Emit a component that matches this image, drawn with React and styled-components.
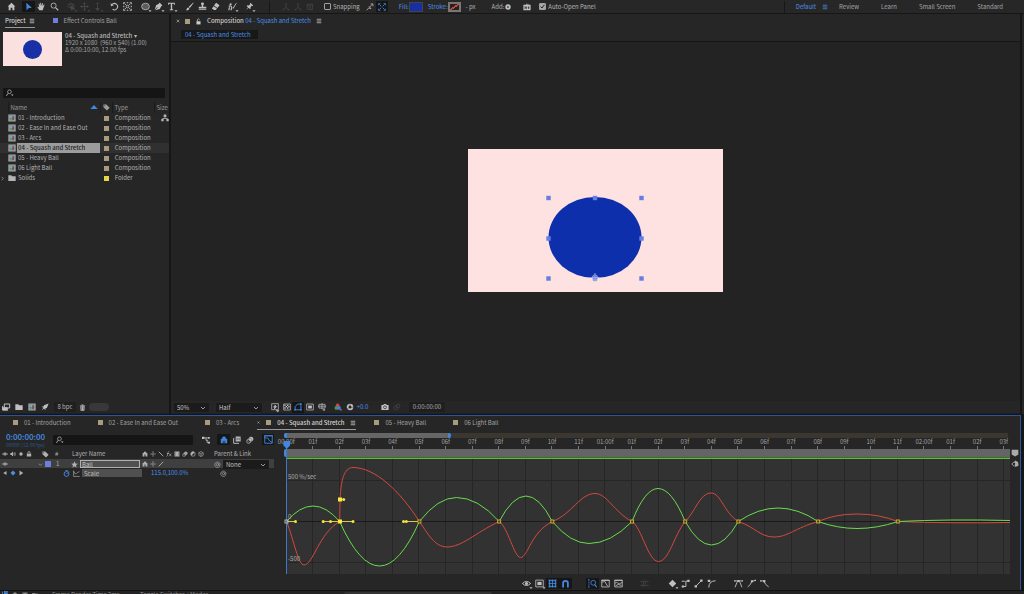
import React from 'react';
import styled, { createGlobalStyle, css } from 'styled-components';

const GlobalStyle = createGlobalStyle`
  * {
    box-sizing: border-box;
  }

  body {
    margin: 0;
    background: #161616;
    color: #b4b4b4;
    font-family: 'Noto Sans CJK SC', 'Noto Sans', sans-serif;
    font-size: 6px;
    line-height: 10px;
    overflow: hidden;
  }

  button, input, select {
    font: inherit;
    color: inherit;
    margin: 0;
    padding: 0;
    border: 0;
    background: none;
  }

  svg {
    display: block;
    flex: none;
  }
`;

/* ---------- icons ---------- */

const line = { fill: 'none', stroke: 'currentColor', strokeWidth: 1.1 };

const icons = {
  home: <path d="M6 1 0.8 6H2.2V11H4.8V7.6H7.2V11H9.8V6H11.2Z" />,
  select: <path d="M3 1 10.5 7.6 6.4 7.9 3.4 11Z" />,
  hand: (
    <path d="M3.2 11 0.8 7.2C0.4 6.4 1.4 6 2 6.6L3 7.8 2.2 2.8C2.1 2 3.1 1.8 3.3 2.6L4.2 5.4 4.3 1.6C4.3 0.8 5.4 0.8 5.5 1.6L5.8 5.2 6.8 1.9C7 1.2 8 1.4 7.9 2.2L7.4 5.7 9 3.6C9.5 3 10.3 3.6 9.9 4.3L8.2 9 7.6 11Z" />
  ),
  zoom: (
    <g {...line}>
      <circle cx="4.8" cy="4.8" r="3.4" />
      <path d="M7.4 7.4 11 11" strokeWidth="1.5" />
    </g>
  ),
  orbit: (
    <g {...line}>
      <ellipse cx="5.5" cy="5" rx="4.5" ry="2.6" />
      <path d="M3 3.6Q6 0 8 4L6 9 10 10" />
      <path d="M5 5 6 11 7.4 8.6 10 8.6Z" fill="currentColor" />
    </g>
  ),
  pan: <path d="M6 0 8 2.5H6.6V5.4H9.5V4L12 6 9.5 8V6.6H6.6V9.5H8L6 12 4 9.5H5.4V6.6H2.5V8L0 6 2.5 4V5.4H5.4V2.5H4Z" />,
  dolly: <path d="M6 0 7.5 2.5H6.5V8H9L6 12 3 8H5.5V2.5H4.5Z" />,
  rotate: (
    <g>
      <path {...line} d="M2.6 3.6A4.2 4.2 0 1 1 3.4 9.6" strokeWidth="1.4" />
      <path d="M0.8 1.5 1.4 5.6 5 4.4Z" />
    </g>
  ),
  anchor: (
    <g {...line}>
      <path d="M1 3V1H3M5 1H7M9 1H11V3M11 5V7M11 9V11H9M7 11H5M3 11H1V9M1 7V5" strokeWidth="1.4" />
      <circle cx="6" cy="6" r="1.8" />
      <path d="M2.6 2.6 4.4 4.4M9.4 2.6 7.6 4.4M2.6 9.4 4.4 7.6M9.4 9.4 7.6 7.6" />
    </g>
  ),
  ellipse: <ellipse cx="6" cy="6" rx="5.2" ry="4.4" fill="#5c5c5c" stroke="currentColor" />,
  pen: <path d="M7.5 0.8 11.2 4.5 9.6 5.6 7.8 9.2 1.6 11 4.6 7.8 5.4 6.8 4 7.2 1 10.4 2.8 4.2 6.4 2.4Z" />,
  type: <path d="M1.5 1H10.5V3.8H9.2V2.4H6.9V9.8H8.2V11H3.8V9.8H5.1V2.4H2.8V3.8H1.5Z" />,
  brush: <path d="M11 0.8 11.4 1.2 6.4 8 4.8 6.6ZM4.2 7.2 5.9 8.7C5.4 10.8 3 11.4 1 11 2.4 10 2.4 7.6 4.2 7.2Z" />,
  stamp: <path d="M6 0.8C8.6 0.8 8.2 3.4 7 4.4V6.4H11V8.6H1V6.4H5V4.4C3.8 3.4 3.4 0.8 6 0.8ZM1 9.6H11V10.8H1Z" />,
  eraser: <path d="M6.8 1 11.4 4.2 8.6 8 4 4.8ZM3.5 5.5 8 8.7 6.4 10.8H4L1.2 8.8Z" />,
  roto: (
    <g>
      <circle cx="3.5" cy="3" r="1.5" />
      <path {...line} d="M1 6Q3.5 4 5 7L4 11M2 7 1 11" strokeWidth="1.5" />
      <path d="M11 1 11.5 1.5 7.8 8 6.4 9.6 6.7 7.4Z" />
    </g>
  ),
  pin: <path d="M7.2 1 11 4.8 9.8 5.3 8.9 5 7.4 6.7 7.5 8.7 6.5 9.4 4.6 7.5 1.2 10.8 4 7 2.2 5.4 3.2 4.4 5.2 4.7 7 3.1 6.7 2.1Z" />,
  axis: (
    <g {...line}>
      <path d="M6 1V6.6L1.6 10.4M6 6.6 10.4 10.4M4.8 2.5 6 1 7.2 2.5M1.6 8.6V10.4H3.4M10.4 8.6V10.4H8.6" />
    </g>
  ),
  viewAxis: (
    <g {...line}>
      <path d="M1.5 2.5 10 1.5 9.5 10 2.5 9.5ZM6 6 2 2M6 6 9 1.8M6 6 6.5 10" />
    </g>
  ),
  snapArrow: (
    <g {...line}>
      <path d="M1 11 4 7.5 7.5 8.5 4.5 5M5 6.5 10 1.6M6.8 1.4H10.4V5" />
    </g>
  ),
  snapBox: (
    <g {...line} strokeWidth="1.4">
      <path d="M1 3.4V1H3.4M8.6 1H11V3.4M11 8.6V11H8.6M3.4 11H1V8.6" />
      <path d="M2.4 2.4 4.4 4.4M9.6 2.4 7.6 4.4M2.4 9.6 4.4 7.6M9.6 9.6 7.6 7.6" />
      <path d="M5.2 6H6.8" />
    </g>
  ),
  play: (
    <g>
      <circle cx="6" cy="6" r="5.4" />
      <path d="M4.8 3.4 8.4 6 4.8 8.6Z" fill="#262626" />
    </g>
  ),
  panelBox: (
    <g>
      <path d="M0.6 2.5H4.5V1H5.6V2.5H6.8V1H8V2.5H11.4V11H0.6Z" />
      <path d="M3 5V9M5 5V9M3 7H5M7 7H9.6M8.4 5V9" fill="none" stroke="#262626" />
    </g>
  ),
  menu: (
    <g {...line} strokeWidth="1.5">
      <path d="M1.5 2.5H10.5M1.5 6H10.5M1.5 9.5H10.5" />
    </g>
  ),
  close: <path {...line} d="M2 2 10 10M10 2 2 10" strokeWidth="1.8" />,
  lock: (
    <g>
      <path d="M2.5 5.5H9.5V11H2.5Z" />
      <path {...line} d="M4 5.5V3Q6 0 8 3" strokeWidth="1.4" />
    </g>
  ),
  search: (
    <g {...line}>
      <circle cx="5.2" cy="4.2" r="2.8" />
      <path d="M3.2 6.4 0.6 10.4" strokeWidth="1.3" />
      <path d="M7.4 8.2H11.4L9.4 10.6Z" fill="currentColor" stroke="none" />
    </g>
  ),
  comp: (
    <g>
      <path d="M0.5 0.8H11.5V11.2H0.5Z" fill="#b4b4b4" />
      <path d="M1.4 2V10M10.6 2V10" stroke="#555" strokeDasharray="1.2 1" />
      <path d="M2.6 2.4H9.4V9.6H2.6Z" fill="#5a6872" />
      <circle cx="5" cy="4.8" r="1.9" fill="#7fb2e0" />
      <path d="M5.6 5H8.8V8.2H5.6Z" fill="#8f4a44" />
      <path d="M3 9.2 4.8 5.8 6.6 9.2Z" fill="#62b06a" />
    </g>
  ),
  folder: <path d="M0.5 1.8H5L6 3.2H11.5V10.4H0.5Z" />,
  tag: <path d="M0.8 1H5.6L11.4 6.4 6.8 11.2 0.8 5.6ZM2.8 2.2A0.9 0.9 0 1 0 2.9 4 0.9 0.9 0 0 0 2.8 2.2Z" fillRule="evenodd" />,
  network: <path d="M4 0.8H8V4.4H6.6V6H9.8V7.4H11.6V11H8V7.4H8.6V7H3.4V7.4H4V11H0.4V7.4H2.2V6H5.4V4.4H4Z" />,
  chevronDown: <path {...line} d="M2 4 6 8 10 4" strokeWidth="1.5" />,
  chevronRight: <path {...line} d="M4 2 8 6 4 10" strokeWidth="1.5" />,
  interpret: (
    <g {...line}>
      <path d="M3.5 1.5H11.5V7.5H3.5ZM1 4.5V10.5H9" strokeWidth="1.5" />
      <path d="M1 7H8V10.5H1Z" fill="currentColor" />
    </g>
  ),
  rocket: <path d="M11.4 0.6 8.8 7.6 6.8 7.8 6.4 11 4.6 8.4 1 11 3.6 7 1 5.6 4.2 5 4.6 3.2Z" />,
  trash: <path d="M4.4 0.8H7.6V2H10.6V3.2H1.4V2H4.4ZM2.2 4H9.8L9.2 11.4H2.8ZM4.4 5.2V10H5.2V5.2ZM6.8 5.2V10H7.6V5.2Z" fillRule="evenodd" />,
  fastPreview: (
    <g {...line}>
      <path d="M1 1H11V10H1Z" />
      <path d="M6.5 3 4 6.2H6L5 9 8.4 5.4H6.4Z" fill="currentColor" />
      <path d="M8 11.4H12L10 13Z" fill="currentColor" />
    </g>
  ),
  grid: (
    <g {...line}>
      <path d="M1 1.5H11V10.5H1Z" />
      <path d="M2 2.5H4V4.5H2ZM6 2.5H8V4.5H6ZM4 4.5H6V6.5H4ZM8 4.5H10V6.5H8ZM2 6.5H4V8.5H2ZM6 6.5H8V8.5H6Z" fill="currentColor" stroke="none" />
    </g>
  ),
  mask: (
    <g {...line}>
      <path d="M1.6 10.2V5.6L5.4 1.6H10.4V10.2Z" strokeWidth="1.4" />
      <path d="M0.4 9H2.8V11.4H0.4ZM9.2 9H11.6V11.4H9.2ZM9.2 0.4H11.6V2.8H9.2Z" fill="currentColor" stroke="none" />
    </g>
  ),
  region: (
    <g>
      <path {...line} d="M1 1.5H11V10.5H1Z" />
      <path d="M3.2 3.8H8.8V8.2H3.2Z" />
    </g>
  ),
  guides: (
    <g {...line}>
      <path d="M1.4 2H10.6V7.6H1.4ZM6 0V9.6M0 4.8H12M9 8.4V12M7.2 10.2H10.8" />
    </g>
  ),
  channels: (
    <g>
      <circle cx="5.4" cy="3.6" r="2.8" fill="#d8413c" />
      <circle cx="3.6" cy="7.4" r="2.8" fill="#3f9c4b" />
      <circle cx="7.4" cy="7.4" r="2.8" fill="#4f7ddf" />
      <path d="M9 9.6H12L10.5 11.6Z" />
    </g>
  ),
  exposure: (
    <g>
      <circle {...line} cx="6" cy="6" r="3.6" strokeWidth="2.6" />
      <path d="M6 1V4M11 6 8 7M2 9 4 7" stroke="#262626" strokeWidth="0.7" />
    </g>
  ),
  camera: (
    <g>
      <path d="M0.6 3H3.4L4.4 1.4H7.6L8.6 3H11.4V10.4H0.6Z" />
      <circle cx="6" cy="6.4" r="2.2" fill="none" stroke="#262626" />
    </g>
  ),
  snapshot: (
    <g {...line}>
      <circle cx="4" cy="7.5" r="2.8" />
      <circle cx="7.6" cy="4.4" r="2.8" />
    </g>
  ),
  flowchart: (
    <g>
      <path d="M0 1H3.6V4.6H0ZM9 1.6H11.6V4H9ZM9 8.6H12V11.4H9Z" />
      <path {...line} d="M3 2.8H9M6 2.8V6.4H9.4M7.6 6.4V10H9" strokeWidth="1.2" />
    </g>
  ),
  shy: <path d="M6 0.8A2.6 2.6 0 0 1 8.6 4H10.8V10.8H7.8V7.2H6.8V10.8H5.2V7.2H4.2V10.8H1.2V4H3.4A2.6 2.6 0 0 1 6 0.8Z" />,
  frameBlend: (
    <g>
      <path d="M4 0.8H11.4V8.2H4Z" />
      <path {...line} d="M1 3V11H9" strokeWidth="1.4" />
      <path d="M6.2 2.6V6.4M9.2 2.6V6.4" stroke="#262626" />
    </g>
  ),
  motionBlur: (
    <g fill="none" stroke="currentColor">
      <circle cx="7.6" cy="4.6" r="3" fill="currentColor" />
      <circle cx="5.6" cy="6.4" r="3" stroke="#777" />
      <circle cx="4" cy="8" r="3" />
    </g>
  ),
  graph: (
    <g {...line} strokeWidth="1.2">
      <path d="M1 1V11H11V1ZM2 4H5Q7 9 11 10M0 1H12M0 3H2" />
    </g>
  ),
  eye: (
    <g>
      <path {...line} d="M0.6 6Q6 0.6 11.4 6 6 11.4 0.6 6Z" strokeWidth="1.3" />
      <circle cx="6" cy="6" r="2" />
    </g>
  ),
  speaker: (
    <g>
      <path d="M0.8 4H3L6 1V11L3 8H0.8Z" />
      <path {...line} d="M7.6 3.6Q9 6 7.6 8.4M9.4 2Q12 6 9.4 10" strokeWidth="1.3" />
    </g>
  ),
  dot: <circle cx="6" cy="6" r="3.4" />,
  padlock: (
    <g>
      <path d="M1.6 5.4H10.4V11H1.6Z" />
      <path {...line} d="M3.8 5.6V3.4A2.2 2.2 0 0 1 8.2 3.4V5.6" strokeWidth="1.7" />
    </g>
  ),
  sun: (
    <g {...line}>
      <circle cx="6" cy="6" r="2.2" />
      <path d="M6 0.6V3M6 9V11.4M0.6 6H3M9 6H11.4" strokeWidth="1.4" />
    </g>
  ),
  backslash: <path {...line} d="M1.5 1.5 10.5 10.5" strokeWidth="1.8" />,
  slash: <path {...line} d="M1.5 10.5 10.5 1.5" strokeWidth="1.8" />,
  fx: <path {...line} d="M1 11Q3 11 3.4 6L4 3Q4.4 1 6.4 1.4M1.6 5H6M6.4 5 10.8 10.6M10.8 5 6 10.6" strokeWidth="1.3" />,
  film: (
    <g>
      <path d="M1 1H11V11H1Z" />
      <path d="M2.4 2V10M9.6 2V10" stroke="#262626" strokeDasharray="1.2 0.8" />
    </g>
  ),
  half: (
    <g>
      <circle {...line} cx="6" cy="6" r="4.4" strokeWidth="1.4" />
      <path d="M9.2 2.8A4.4 4.4 0 0 0 2.8 9.2L6 6Z" />
    </g>
  ),
  cube: <path {...line} d="M6 1 10.4 3.4V8.6L6 11 1.6 8.6V3.4ZM1.6 3.4 6 6 10.4 3.4M6 6V11" strokeWidth="1.2" />,
  star: <path d="M6 0.5 7.6 4.3 11.6 4.7 8.6 7.3 9.5 11.4 6 9.2 2.5 11.4 3.4 7.3 0.4 4.7 4.4 4.3Z" />,
  spiral: <path {...line} d="M9.6 9.2A4.6 4.6 0 1 1 10.4 5.6Q10.4 8.2 8.8 8 7.8 7.8 8 6 8 4 6 4 4 4.2 4 6.2 4.2 8.2 6 8 7.6 7.6 8 5.6" strokeWidth="1.1" />,
  stopwatch: (
    <g {...line} strokeWidth="1.5">
      <circle cx="6" cy="6.8" r="4.2" />
      <path d="M6 7 8 4.8M4.4 0.9H7.6M9.4 2.2 10.8 3.4" />
    </g>
  ),
  curveBox: (
    <g {...line}>
      <path d="M1 1V11H11.4M1 2Q4 9 6 6T11 3" />
    </g>
  ),
  triLeft: <path d="M9 2V10L2.5 6Z" />,
  triRight: <path d="M3 1V11L10.5 6Z" />,
  diamond: <path d="M6 1 11 6 6 11 1 6Z" />,
  triUp: <path d="M6 3 11.5 9H0.5Z" />,
  transformBox: (
    <g {...line}>
      <path d="M2 2H10V10H2ZM2 6H10M6 2V10" />
      <path d="M0.8 0.8h2.4v2.4h-2.4zM4.8 0.8h2.4v2.4h-2.4zM8.8 0.8h2.4v2.4h-2.4zM0.8 4.8h2.4v2.4h-2.4zM8.8 4.8h2.4v2.4h-2.4zM0.8 8.8h2.4v2.4h-2.4zM4.8 8.8h2.4v2.4h-2.4zM8.8 8.8h2.4v2.4h-2.4z" fill="currentColor" stroke="none" />
    </g>
  ),
  magnet: <path {...line} d="M2.8 11.4V5.6A3.2 3.2 0 0 1 9.2 5.6V11.4" strokeWidth="2.4" />,
  autoZoom: (
    <g {...line}>
      <path d="M1.2 0.8V11.2M0 1H2.4M0 11H2.4" strokeDasharray="1.8 0.8" />
      <circle cx="7" cy="5" r="3.2" />
      <path d="M9 7.4 11.6 11" strokeWidth="1.5" />
    </g>
  ),
  fitSelection: (
    <g {...line}>
      <path d="M1 1.4H11V10.6H1ZM1 4H3L5 3 8 8.6H9M0.6 2H11.4" />
    </g>
  ),
  fitAll: (
    <g {...line}>
      <path d="M1 1.4H11V10.6H1ZM1 6Q3 3 5 5.4T11 4.4M2 9Q5 6 10 8.4M0.6 2H11.4" />
    </g>
  ),
  separate: (
    <g {...line}>
      <path d="M0.5 3.5H5M7 3.5H11.5M0.5 8.5H5M7 8.5H11.5M5.5 1.5 3.5 10M8 2.5 6 10" />
    </g>
  ),
  hold: (
    <g>
      <path {...line} d="M2.5 10H6.5V2.8H10" strokeWidth="1.3" />
      <path d="M1 8.6H4V11.4H1ZM8.5 1H11.5V4H8.5ZM1 2.2H5V3.6H1Z" />
    </g>
  ),
  linear: (
    <g>
      <path {...line} d="M2.5 9.6 9.5 2.4" strokeWidth="1.3" />
      <path d="M0.8 8.2H4V11.2H0.8ZM8.2 0.8H11.4V3.8H8.2Z" />
    </g>
  ),
  auto: (
    <g>
      <path {...line} d="M2.4 11.4Q2.4 2.6 11.4 2.4" strokeWidth="1.3" />
      <path d="M1 1H4.4V4H1Z" />
    </g>
  ),
  easy: (
    <g>
      <path {...line} d="M1 2.6H11M1.4 11Q4 3 6 2.6 8 3 10.6 11" strokeWidth="1.2" />
      <path d="M4.6 1.2H7.4V4H4.6ZM0 1.8H1.8V3.4H0ZM10.2 1.8H12V3.4H10.2Z" />
    </g>
  ),
  easeIn: (
    <g>
      <path {...line} d="M0.8 10.6Q5 8 6.4 3.4L11 2" strokeWidth="1.2" />
      <path d="M5.2 1.6H8.2V4.4H5.2ZM10 1H12V2.8H10Z" />
    </g>
  ),
  easeOut: (
    <g>
      <path {...line} d="M1 2.6H5Q7 8 11.6 10.6" strokeWidth="1.2" />
      <path d="M4.2 1.2H7.2V4.2H4.2ZM0 1.6H2V3.4H0Z" />
    </g>
  ),
  marker: <path d="M1 1H11V8.4L6 11.4 1 8.4Z" />,
  compButton: (
    <g>
      <path {...line} d="M4.6 2.6 1.2 6 4.6 9.6" strokeWidth="1.4" />
      <path d="M6.4 0.8 10.6 3 11.4 8.2 7 10.6 5.4 8.6 6.2 5 4.4 3.4Z" />
    </g>
  ),
};

const Svg = styled.svg`
  width: ${props => props.$size}px;
  height: ${props => props.$size}px;
  fill: currentColor;
  overflow: visible;
`;

function Icon({ name, size = 8, more }) {
  return (
    <Svg viewBox="0 0 12 12" $size={size} aria-hidden="true">
      {icons[name]}
      {more && <path d="M10 11H14L12 13.4Z" />}
    </Svg>
  );
}

/* ---------- shared parts ---------- */

const Page = styled.div`
  height: 100vh;
  display: flex;
  flex-direction: column;
`;

const IconButton = styled.button`
  width: ${props => props.$width || 13}px;
  height: 11px;
  display: flex;
  align-items: center;
  justify-content: center;
  flex: none;
  color: ${props => (props.$on ? '#4287df' : props.$dim ? '#464646' : '#c0c0c0')};
  background: ${props => (props.$on ? '#161616' : 'transparent')};
`;

const Swatch = styled.span`
  width: ${props => props.$size || 5}px;
  height: ${props => props.$size || 5}px;
  flex: none;
  background: ${props => props.$color || '#a99b7c'};
`;

const Divider = styled.span`
  width: 1px;
  height: 12px;
  flex: none;
  background: #181818;
`;

const Spacer = styled.span`
  flex: 1;
`;

const SearchField = styled.label`
  height: 10px;
  flex: ${props => (props.$width ? 'none' : 1)};
  width: ${props => (props.$width ? props.$width + 'px' : 'auto')};
  display: flex;
  align-items: center;
  padding-left: 3px;
  border-radius: 1px;
  background: #151515;

  input {
    flex: 1;
    min-width: 0;
    height: 10px;
    outline: none;
  }
`;

const Tab = styled.button`
  height: 14px;
  display: flex;
  align-items: center;
  flex: none;
  gap: ${props => props.$gap || 6}px;
  white-space: nowrap;
  color: ${props => (props.$active ? '#d4d4d4' : '#a2a2a2')};
  font-weight: ${props => (props.$active ? 500 : 400)};
  border-bottom: 1px solid ${props => (props.$active ? '#9a9a9a' : 'transparent')};
`;

const SelectWrap = styled.label`
  position: relative;
  width: ${props => props.$width}px;
  height: 9px;
  flex: none;
  color: #c4c4c4;
  background: #1b1b1b;

  select {
    width: 100%;
    height: 9px;
    padding-left: 3px;
    appearance: none;
    line-height: 9px;
    outline: none;
  }

  svg {
    position: absolute;
    right: 3px;
    top: 2px;
    pointer-events: none;
  }
`;

function Dropdown({ label, width, options }) {
  return (
    <SelectWrap $width={width}>
      <select aria-label={label}>
        {options.map(option => <option key={option}>{option}</option>)}
      </select>
      <Icon name="chevronDown" size={6} />
    </SelectWrap>
  );
}

/* ---------- top toolbar ---------- */

const Toolbar = styled.header`
  height: 13px;
  flex: none;
  display: flex;
  align-items: center;
  padding-left: 1px;
  background: #272727;
`;

const ToolGroup = styled.div`
  display: flex;
  align-items: center;
  flex: none;
  margin-left: ${props => props.$gap || 4}px;
  white-space: nowrap;
`;

const CheckLabel = styled.label`
  display: flex;
  align-items: center;
  gap: 2px;
  white-space: nowrap;
`;

const CheckBox = styled.input`
  appearance: none;
  width: 7px;
  height: 7px;
  border: 1px solid #a0a0a0;
  border-radius: 1px;
`;

const CheckBoxOn = styled.span`
  display: grid;
  color: #222;

  input, svg {
    grid-area: 1 / 1;
    place-self: center;
  }

  input:checked {
    background: #a8a8a8;
  }
`;

const LinkText = styled.button`
  color: #4a90e6;
`;

const FillButton = styled.button`
  width: 14px;
  height: 10px;
  border: 1px solid #444;
  background: #172ea6;
`;

const StrokeButton = styled.button`
  width: 13px;
  height: 10px;
  border: 2px solid #777;
  background: linear-gradient(to bottom right, #2a2020 42%, #c14a3e 42%, #c14a3e 58%, #2a2020 58%);
`;

const WorkspaceNav = styled.nav`
  display: flex;
  align-items: center;
  flex: none;
  padding-right: 10px;
  white-space: nowrap;
`;

const Workspace = styled.button`
  display: flex;
  align-items: center;
  gap: 6px;
  padding: 0 ${props => (props.$active ? 0 : 11)}px 0 11px;
  color: ${props => (props.$active ? '#4a90e6' : '#a6a6a6')};
`;

const toolGroups = [
  { gap: 4, names: ['home'] },
  { gap: 4, names: ['select', 'hand', 'zoom'] },
  { gap: 4, names: ['orbit', 'pan', 'dolly'] },
  { gap: 4, names: ['rotate', 'anchor'] },
  { gap: 5, names: ['ellipse', 'pen', 'type'] },
  { gap: 5, names: ['brush', 'stamp', 'eraser'] },
  { gap: 4, names: ['roto'] },
  { gap: 4, names: ['pin'] },
];

const dimTools = ['orbit', 'pan', 'dolly'];
const toolsWithMore = ['orbit', 'pan', 'dolly', 'ellipse', 'pen', 'type', 'roto', 'pin'];

function TopBar() {
  return (
    <Toolbar>
      {toolGroups.map(group => (
        <ToolGroup key={group.names[0]} $gap={group.gap}>
          {group.names.map(name => (
            <IconButton
              key={name}
              aria-label={name}
              $on={name === 'select'}
              $dim={dimTools.includes(name)}
            >
              <Icon name={name} size={9} more={toolsWithMore.includes(name)} />
            </IconButton>
          ))}
        </ToolGroup>
      ))}
      <ToolGroup $gap={13}>
        <Divider />
      </ToolGroup>
      <ToolGroup $gap={10}>
        <IconButton $width={12} $dim aria-label="Local axis"><Icon name="axis" /></IconButton>
        <IconButton $width={12} $dim aria-label="World axis"><Icon name="axis" /></IconButton>
        <IconButton $width={12} $dim aria-label="View axis"><Icon name="viewAxis" /></IconButton>
      </ToolGroup>
      <ToolGroup $gap={8}>
        <CheckLabel>
          <CheckBox type="checkbox" />
          Snapping
        </CheckLabel>
      </ToolGroup>
      <ToolGroup>
        <IconButton $width={12} aria-label="Snap edges"><Icon name="snapArrow" /></IconButton>
        <IconButton $width={12} $on aria-label="Snap features"><Icon name="snapBox" /></IconButton>
      </ToolGroup>
      <ToolGroup $gap={11}>
        <LinkText>Fill:</LinkText>
        <FillButton aria-label="Fill colour" />
      </ToolGroup>
      <ToolGroup $gap={5}>
        <LinkText>Stroke:</LinkText>
        <StrokeButton aria-label="Stroke colour" />
      </ToolGroup>
      <ToolGroup $gap={5}>- px</ToolGroup>
      <ToolGroup $gap={16}>
        Add:
        <IconButton $width={8} aria-label="Add"><Icon name="play" size={6} /></IconButton>
      </ToolGroup>
      <ToolGroup $gap={8}>
        <IconButton aria-label="Panels"><Icon name="panelBox" /></IconButton>
      </ToolGroup>
      <ToolGroup $gap={6}>
        <CheckLabel>
          <CheckBoxOn>
            <CheckBox type="checkbox" defaultChecked />
            <svg width="5" height="5" viewBox="0 0 5 5">
              <path d="M0.6 2.6 2 4 4.4 0.8" fill="none" stroke="currentColor" />
            </svg>
          </CheckBoxOn>
          Auto-Open Panel
        </CheckLabel>
      </ToolGroup>
      <Spacer />
      <Divider />
      <WorkspaceNav>
        <Workspace $active>Default <Icon name="menu" size={6} /></Workspace>
        <Workspace>Review</Workspace>
        <Workspace>Learn</Workspace>
        <Workspace>Small Screen</Workspace>
        <Workspace>Standard</Workspace>
      </WorkspaceNav>
    </Toolbar>
  );
}

/* ---------- project panel ---------- */

const Upper = styled.main`
  flex: 1;
  min-height: 0;
  display: flex;
  gap: 2px;
  padding: 1px 0;
`;

const ProjectPanel = styled.section`
  width: 169px;
  flex: none;
  display: flex;
  flex-direction: column;
  background: #262626;
`;

const ProjectTabs = styled.div`
  display: flex;
  gap: 18px;
  padding-left: 5px;
`;

const ClipInfo = styled.div`
  display: flex;
  gap: 3px;
  padding: 4px 3px 0;
  height: 60px;
  color: #a6a6a6;
  line-height: 7px;
  white-space: nowrap;
`;

const Thumb = styled.div`
  width: 59px;
  height: 34px;
  display: flex;
  align-items: center;
  justify-content: center;
  background: #fbe0e0;
`;

const ThumbBall = styled.div`
  width: 19px;
  height: 19px;
  border-radius: 50%;
  background: #182fa6;
`;

const ClipTitle = styled.div`
  font-weight: 500;
  color: #b8b8b8;
`;

const SearchRow = styled.div`
  display: flex;
  padding: 0 4px 4px 3px;
`;

const FileTable = styled.table`
  width: 100%;
  table-layout: fixed;
  border-collapse: collapse;
  white-space: nowrap;

  th, td {
    height: 10px;
    padding: 0;
    font-weight: 400;
    text-align: left;
    line-height: 10px;
    vertical-align: middle;
  }

  thead td {
    height: 11px;
  }

  th {
    color: #9c9c9c;
    border-left: 1px solid #1a1a1a;
    padding-left: 2px;
  }
`;

const FileRow = styled.tr`
  background: ${props => (props.$selected ? '#303030' : 'transparent')};
`;

const FileName = styled.div`
  display: flex;
  align-items: center;
  height: 10px;
  gap: 1px;

  span {
    flex: 1;
    padding-left: 1px;
    ${props => props.$selected && css`
      background: #9c9c9c;
      color: #1c1c1c;
      font-weight: 500;
    `}
  }
`;

const SortHead = styled.div`
  display: flex;
  justify-content: space-between;
  padding-right: 2px;

  svg {
    color: #4287df;
  }
`;

const CellIcon = styled.div`
  display: flex;
  justify-content: ${props => props.$align || 'center'};
`;

const PanelFooter = styled.div`
  height: 13px;
  flex: none;
  display: flex;
  align-items: center;
  background: #262626;
  border-bottom: 1px solid #1f1f1f;
`;

const DepthButton = styled.button`
  width: 22px;
  margin: 0 0 0 3px;
  background: #1f1f1f;
`;

const ScrollPill = styled.span`
  width: 20px;
  height: 8px;
  border-radius: 4px;
  background: #383838;
`;

const files = [
  { name: '01 - Introduction', type: 'Composition' },
  { name: '02 - Ease In and Ease Out', type: 'Composition' },
  { name: '03 - Arcs', type: 'Composition' },
  { name: '04 - Squash and Stretch', type: 'Composition', selected: true },
  { name: '05 - Heavy Ball', type: 'Composition' },
  { name: '06 Light Ball', type: 'Composition' },
  { name: 'Solids', type: 'Folder', color: '#e5d548' },
];

function Project() {
  return (
    <ProjectPanel>
      <ProjectTabs>
        <Tab $active $gap={3}>Project <Icon name="menu" size={6} /></Tab>
        <Tab><Swatch $color="#6d7fdc" />Effect Controls Ball</Tab>
      </ProjectTabs>
      <ClipInfo>
        <Thumb><ThumbBall /></Thumb>
        <div>
          <ClipTitle>04 - Squash and Stretch ▾</ClipTitle>
          <div>1920 x 1080 &nbsp;(960 x 540) (1.00)</div>
          <div>Δ 0:00:10:00, 12.00 fps</div>
        </div>
      </ClipInfo>
      <SearchRow>
        <SearchField>
          <Icon name="search" />
          <input aria-label="Search project" />
        </SearchField>
      </SearchRow>
      <FileTable>
        <colgroup>
          <col width="8" />
          <col width="92" />
          <col width="12" />
          <col width="42" />
          <col />
        </colgroup>
        <thead>
          <tr>
            <td />
            <th><SortHead>Name <Icon name="triUp" /></SortHead></th>
            <th><Icon name="tag" size={7} /></th>
            <th>Type</th>
            <th>Size</th>
          </tr>
        </thead>
        <tbody>
          {files.map((file, i) => (
            <FileRow key={file.name} $selected={file.selected}>
              <td>{file.type === 'Folder' && <Icon name="chevronRight" size={5} />}</td>
              <td>
                <FileName $selected={file.selected}>
                  <Icon name={file.type === 'Folder' ? 'folder' : 'comp'} />
                  <span>{file.name}</span>
                </FileName>
              </td>
              <td><CellIcon><Swatch $color={file.color} /></CellIcon></td>
              <td>&nbsp;&nbsp;{file.type}</td>
              <td>{i === 0 && <CellIcon $align="flex-end"><Icon name="network" /></CellIcon>}</td>
            </FileRow>
          ))}
        </tbody>
      </FileTable>
      <Spacer />
      <PanelFooter>
        <IconButton $width={12} aria-label="Interpret footage"><Icon name="interpret" /></IconButton>
        <IconButton aria-label="New folder"><Icon name="folder" /></IconButton>
        <IconButton aria-label="New composition"><Icon name="comp" /></IconButton>
        <IconButton aria-label="Adjust settings"><Icon name="rocket" /></IconButton>
        <DepthButton>8 bpc</DepthButton>
        <IconButton aria-label="Delete"><Icon name="trash" size={7} /></IconButton>
        <ScrollPill />
      </PanelFooter>
    </ProjectPanel>
  );
}

/* ---------- composition viewer ---------- */

const CompPanel = styled.section`
  flex: 1;
  min-width: 0;
  display: flex;
  flex-direction: column;
  background: #262626;
`;

const EdgePanel = styled.div`
  width: 2px;
  flex: none;
  background: #262626;
`;

const CompHead = styled.div`
  height: 14px;
  display: flex;
  align-items: center;
  gap: 5px;
  padding-left: 5px;
  color: #cacaca;
  white-space: nowrap;

  b {
    font-weight: 500;
  }
`;

const Crumbs = styled.div`
  height: 14px;
  display: flex;
  align-items: center;
  padding-left: 10px;
  border-bottom: 1px solid #161616;
`;

const Crumb = styled.button`
  width: 77px;
  height: 9px;
  padding-left: 4px;
  line-height: 9px;
  text-align: left;
  color: #4a90e6;
  background: #181818;
`;

const Viewer = styled.div`
  flex: 1;
  min-height: 0;
  display: flex;
  align-items: center;
  justify-content: center;
  padding-bottom: 2px;
  background: #232323;
`;

const Stage = styled.svg`
  width: 256px;
  height: 144px;
`;

const ViewerFooter = styled(PanelFooter)`
  padding-left: 3px;
`;

const ValueText = styled.span`
  width: ${props => props.$width}px;
  text-align: center;
  color: ${props => (props.$blue ? '#4a90e6' : '#a8a8a8')};
  background: ${props => (props.$blue ? 'transparent' : '#1f1f1f')};
`;

const handles = [
  [80.5, 49], [127, 49], [173.5, 49],
  [80.5, 89.5], [173.5, 89.5],
  [80.5, 129.5], [127, 129.5], [173.5, 129.5],
];

function Composition() {
  return (
    <CompPanel>
      <CompHead>
        <Icon name="close" size={4} />
        <Swatch />
        <Icon name="lock" size={7} />
        <span><b>Composition</b> <LinkText>04 - Squash and Stretch</LinkText></span>
        <Icon name="menu" size={6} />
      </CompHead>
      <Crumbs>
        <Crumb>04 - Squash and Stretch</Crumb>
      </Crumbs>
      <Viewer>
        <Stage viewBox="0 0 256 144">
          <rect width="255" height="143" fill="#fee1e1" />
          <ellipse cx="127" cy="88.5" rx="46.5" ry="40.5" fill="#0d2fab" />
          {handles.map(([x, y]) => (
            <rect key={`${x}-${y}`} x={x - 2.2} y={y - 2.2} width="4.4" height="4.4" fill="#667de2" />
          ))}
          <g fill="none" stroke="#a9b5ea" strokeWidth="0.8">
            <circle cx="127" cy="128.5" r="2.6" />
            <path d="M127 124V133M122.5 128.5H131.5" />
          </g>
        </Stage>
      </Viewer>
      <ViewerFooter>
        <Dropdown label="Magnification" width={35} options={['50%', '100%']} />
        <ToolGroup $gap={7}>
          <Dropdown label="Resolution" width={46} options={['Half', 'Full']} />
        </ToolGroup>
        <ToolGroup $gap={7}>
          <IconButton $width={12} aria-label="Fast previews"><Icon name="fastPreview" /></IconButton>
          <IconButton $width={11} aria-label="Transparency grid"><Icon name="grid" /></IconButton>
          <IconButton $width={12} $on aria-label="Mask visibility"><Icon name="mask" /></IconButton>
          <IconButton $width={12} aria-label="Region of interest"><Icon name="region" /></IconButton>
          <IconButton $width={11} aria-label="Guides"><Icon name="guides" /></IconButton>
        </ToolGroup>
        <ToolGroup $gap={5}>
          <IconButton $width={12} aria-label="Channels"><Icon name="channels" /></IconButton>
          <IconButton $width={11} aria-label="Exposure"><Icon name="exposure" /></IconButton>
          <ValueText $blue $width={15}>+0.0</ValueText>
        </ToolGroup>
        <ToolGroup $gap={8}>
          <IconButton aria-label="Take snapshot"><Icon name="camera" /></IconButton>
          <IconButton $width={12} $dim aria-label="Show snapshot"><Icon name="snapshot" /></IconButton>
        </ToolGroup>
        <ToolGroup $gap={6}>
          <ValueText $width={36}>0:00:00:00</ValueText>
        </ToolGroup>
      </ViewerFooter>
    </CompPanel>
  );
}

/* ---------- timeline ---------- */

const TimelinePanel = styled.section`
  height: 175px;
  flex: none;
  display: flex;
  flex-direction: column;
  margin-right: 3px;
  background: #262626;
  border-top: 1px solid #2d549b;
  border-right: 1px solid #2d549b;
`;

const TimelineTabs = styled.div`
  height: 14px;
  flex: none;
  display: flex;
  gap: 27px;
  padding-left: 13px;
`;

const TimelineTab = styled(Tab)`
  margin: 0 ${props => (props.$active ? -9 : 0)}px;
`;

const TimelineBody = styled.div`
  flex: 1;
  min-height: 0;
  display: flex;
`;

const LayerColumn = styled.div`
  width: 274px;
  flex: none;
`;

const TimeHead = styled.div`
  height: 19px;
  display: flex;
  align-items: center;
`;

const TimeCode = styled.button`
  width: 49px;
  margin-right: 4px;
  padding-left: 6px;
  text-align: left;
  color: #4a90e6;
  font-size: 8px;
  font-weight: 500;
  line-height: 9px;

  small {
    display: block;
    color: #2f5688;
    font-size: 5px;
    font-weight: 400;
    line-height: 7px;
    white-space: nowrap;
  }
`;

const LayerLine = styled.div`
  height: ${props => (props.$head ? 10 : 9)}px;
  display: grid;
  grid-template-columns: 36px 17px 17px 72px 68px 1fr;
  align-items: center;
  color: #b0b0b0;
  background: ${props => (props.$layer ? '#3f3f3f' : '#262626')};
  white-space: nowrap;
`;

const Cells = styled.div`
  display: flex;
  align-items: center;
  gap: ${props => props.$gap || 2}px;
  padding-left: ${props => props.$pad || 0}px;
  color: ${props => (props.$blue ? '#4a90e6' : 'inherit')};
`;

const LayerName = styled.input`
  width: 60px;
  height: 8px;
  flex: none;
  padding-left: 1px;
  line-height: 6px;
  color: ${props => (props.$boxed ? '#c8c8c8' : '#bcbcbc')};
  background: #505050;
  border: 1px solid ${props => (props.$boxed ? '#b0b0b0' : '#505050')};
  outline: none;
`;

const GraphColumn = styled.div`
  flex: 1;
  min-width: 0;
  display: flex;
  flex-direction: column;
  margin-left: 9px;
`;

const Navigator = styled.div`
  height: 5px;
  margin: 3px 2px 0 1px;
  background: #3b362f;
`;

const NavigatorRange = styled.div`
  width: 23%;
  height: 5px;
  border: solid #4287df;
  border-width: 0 3px;
  border-radius: 2px;
  background: #666;
`;

const Ruler = styled.div`
  height: 11px;
  display: grid;
  grid-template-columns: repeat(28, minmax(0, 1fr));
  margin: 0 -7px 0 -10px;
  color: #a2a2a2;
  line-height: 8px;
`;

const Tick = styled.div`
  display: flex;
  flex-direction: column;
  align-items: center;
  white-space: nowrap;

  &::after {
    content: '';
    width: 1px;
    height: 3px;
    background: #777;
  }
`;

const WorkArea = styled.div`
  height: 8px;
  margin-left: 1px;
  background: #646464;
  border-left: 3px solid #4287df;
  border-radius: 2px 0 0 2px;
`;

const CacheBar = styled.div`
  height: 2px;
  margin-left: 4px;
  background: #58c03c;
  border-top: 1px solid #3b6d2f;
`;

const GraphArea = styled.div`
  position: relative;
  height: 115px;
`;

const Plot = styled.svg`
  width: 100%;
  height: 115px;
  overflow: visible;
`;

const AxisLabel = styled.span`
  position: absolute;
  left: 5px;
  top: ${props => props.$top}px;
  color: #acacac;
  line-height: 8px;
`;

const GraphFooter = styled.div`
  flex: 1;
  display: flex;
  align-items: center;
  justify-content: center;
  padding: 3px 6px 0 0;
`;

const MarkerColumn = styled.div`
  width: 10px;
  flex: none;
  display: flex;
  flex-direction: column;
  align-items: center;
  gap: 3px;
  padding-top: 19px;
  color: #aaa;
`;

const timelineTabs = [
  '01 - Introduction',
  '02 - Ease In and Ease Out',
  '03 - Arcs',
  '04 - Squash and Stretch',
  '05 - Heavy Ball',
  '06 Light Ball',
];

const STEP = 26.58;
const ZERO = 286.5;
const MID = 521.5;

const frames = Array.from({ length: 28 }, (_, i) => {
  const f = String(i % 12).padStart(2, '0');
  if (i % 12 === 0) return `0${i / 12}:00f`;
  return `${f}f`;
});

// frame, peak x and peak y of every arc of the green curve
const greenArcs = [
  [2, 313, 506],
  [5, 379.5, 566],
  [8, 456.5, 497.5],
  [10, 526, 496],
  [13, 589, 543.5],
  [15, 658, 488.5],
  [17, 711.5, 545],
  [20, 778, 508],
  [23, 857, 528.5],
];

function greenPath() {
  let x = ZERO;
  let d = `M${x} ${MID}`;
  greenArcs.forEach(([frame, px, py]) => {
    const end = ZERO + frame * STEP;
    d += `Q${(x + px) / 2} ${py} ${px} ${py}Q${(px + end) / 2} ${py} ${end} ${MID}`;
    x = end;
  });
  return d + 'Q950 519 1010 520.5';
}

const redPath = `M286.5 521.5C294 540 298 565 304 565C313 565 319 533 339.7 521.5
  L340 500C341 475 346 467.5 353 467.5C375 467.5 400 491 419.4 521.5
  C428 534 435 547 447 547C462 547 475 533 499.1 521.5
  C508 527 514 557.5 520.5 557.5C528 557.5 530 533 552.3 521.5
  C572 514 580 493.5 595 493.5C607 493.5 614 512 632 521.5
  C642 528 648 561.5 658.5 561.5C669 561.5 674 535 685.2 521.5
  C695 512 700 493 711 493C721 493 724 513 738.4 521.5
  C755 527 760 537 774 537C788 537 795 528 818.1 521.5
  Q835 514 857 514Q879 514 897.8 521.5Q950 523.5 1010 522.5`;

const keyFrames = [5, 8, 10, 13, 15, 17, 20, 23];
const handleDots = [[295.5, MID], [323.2, MID], [330.5, MID], [353, MID], [343.7, 499.5], [403.5, MID], [406.3, MID]];

function SpeedGraph() {
  return (
    <GraphArea>
      <Plot viewBox="283 459 727 115" preserveAspectRatio="none">
        <rect x="286" y="459" width="724" height="115" fill="#323232" />
        <g stroke="#262626">
          {frames.map((_, i) => (
            <path key={i} d={`M${Math.round(ZERO + i * STEP) - 0.5} 459V574`} />
          ))}
          <path d="M286 480.5H1010M286 562.5H1010" />
          <path d="M286 521.5H1010" stroke="#1a1a1a" />
        </g>
        <path d={redPath} fill="none" stroke="#d4493d" />
        <path d={greenPath()} fill="none" stroke="#68dc4e" />
        <path d="M286.5 521.5H295.5M323 521.5H353M340 499.5H344M403 521.5H419" stroke="#d8ca42" />
        {handleDots.map(([x, y]) => (
          <circle key={x} cx={x} cy={y} r="1.5" fill="#f4e43c" />
        ))}
        <path d="M338 519.5h4v4h-4zM338 497.5h4v4h-4z" fill="#f8ea3f" />
        {keyFrames.map(k => (
          <rect key={k} x={ZERO + k * STEP - 1.5} y="520" width="3" height="3" fill="#413a26" stroke="#c9a735" />
        ))}
        <path d="M286.5 443V574" stroke="#3d78c8" />
        <path d="M283.5 441H290V445.5L286.8 449 283.5 445.5Z" fill="#4287df" />
        <rect x="285" y="520" width="3" height="3" fill="none" stroke="#b5b5a5" />
      </Plot>
      <AxisLabel $top={14}>500 %/sec</AxisLabel>
      <AxisLabel $top={54}>0</AxisLabel>
      <AxisLabel $top={96}>-500</AxisLabel>
    </GraphArea>
  );
}

const graphTools = [
  { gap: 0, names: ['eye', 'region', 'transformBox', 'magnet'] },
  { gap: 14, names: ['autoZoom', 'fitSelection', 'fitAll'] },
  { gap: 13, names: ['separate'] },
  { gap: 15, names: ['diamond', 'hold', 'linear', 'auto'] },
  { gap: 14, names: ['easy', 'easeIn', 'easeOut'] },
];

const activeGraphTools = ['transformBox', 'magnet', 'autoZoom'];
const graphToolsWithMore = ['eye', 'region', 'diamond'];

function Timeline() {
  return (
    <TimelinePanel>
      <TimelineTabs>
        {timelineTabs.map((tab, i) => (
          <TimelineTab key={tab} $active={i === 3}>
            {i === 3 && <Icon name="close" size={3} />}
            <Swatch />
            {tab}
            {i === 3 && <Icon name="menu" size={6} />}
          </TimelineTab>
        ))}
      </TimelineTabs>
      <TimelineBody>
        <LayerColumn>
          <TimeHead>
            <TimeCode>0:00:00:00<small>00000 (12.00 fps)</small></TimeCode>
            <SearchField $width={140}>
              <Icon name="search" />
              <input aria-label="Search layers" />
            </SearchField>
            <ToolGroup $gap={6}>
              <IconButton aria-label="Flowchart"><Icon name="flowchart" /></IconButton>
            </ToolGroup>
            <ToolGroup $gap={5}>
              <IconButton $on aria-label="Shy"><Icon name="shy" /></IconButton>
              <IconButton aria-label="Frame blending"><Icon name="frameBlend" /></IconButton>
              <IconButton aria-label="Motion blur"><Icon name="motionBlur" /></IconButton>
            </ToolGroup>
            <ToolGroup $gap={6}>
              <IconButton $on $width={12} aria-label="Graph editor"><Icon name="graph" size={9} /></IconButton>
            </ToolGroup>
          </TimeHead>
          <LayerLine $head>
            <Cells $pad={2}>
              <Icon name="eye" size={6} />
              <Icon name="speaker" size={6} />
              <Icon name="dot" size={6} />
              <Icon name="padlock" size={6} />
            </Cells>
            <Cells $pad={6}><Icon name="tag" size={7} /></Cells>
            <Cells $pad={2}>#</Cells>
            <Cells $pad={2}>Layer Name</Cells>
            <Cells>
              {['shy', 'sun', 'backslash', 'fx', 'film', 'motionBlur', 'half', 'cube'].map(name => (
                <Icon key={name} name={name} size={6} />
              ))}
            </Cells>
            <Cells $pad={4}>Parent &amp; Link</Cells>
          </LayerLine>
          <LayerLine $layer>
            <Cells $pad={2}><Icon name="eye" size={6} /></Cells>
            <Cells $pad={2}>
              <Icon name="chevronDown" size={5} />
              <Swatch $size={6} $color="#6d7fdc" />
            </Cells>
            <Cells $pad={3}>1</Cells>
            <Cells $pad={1}>
              <Icon name="star" size={7} />
              <LayerName $boxed defaultValue="Ball" aria-label="Layer name" />
            </Cells>
            <Cells>
              <Icon name="shy" size={6} />
              <Icon name="sun" size={6} />
              <Icon name="slash" size={6} />
            </Cells>
            <Cells $pad={4}>
              <Icon name="spiral" size={7} />
              <Dropdown label="Parent" width={46} options={['None']} />
            </Cells>
          </LayerLine>
          <LayerLine>
            <Cells $pad={2}>
              <Icon name="triLeft" size={6} />
              <Cells $blue><Icon name="diamond" size={6} /></Cells>
              <Icon name="triRight" size={6} />
            </Cells>
            <span />
            <Cells $blue $pad={10}><Icon name="stopwatch" size={7} /></Cells>
            <Cells $pad={3}>
              <Icon name="curveBox" size={7} />
              <LayerName defaultValue="Scale" aria-label="Property name" />
            </Cells>
            <Cells $blue $pad={9}>115.0,100.0%</Cells>
            <Cells $pad={10}><Icon name="spiral" size={7} /></Cells>
          </LayerLine>
        </LayerColumn>
        <GraphColumn>
          <Navigator><NavigatorRange /></Navigator>
          <Ruler>
            {frames.map((label, i) => <Tick key={i}>{label}</Tick>)}
          </Ruler>
          <WorkArea />
          <CacheBar />
          <SpeedGraph />
          <GraphFooter>
            {graphTools.map(group => (
              <ToolGroup key={group.names[0]} $gap={group.gap}>
                {group.names.map(name => (
                  <IconButton
                    key={name}
                    aria-label={name}
                    $on={activeGraphTools.includes(name)}
                    $dim={name === 'separate'}
                  >
                    <Icon name={name} size={9} more={graphToolsWithMore.includes(name)} />
                  </IconButton>
                ))}
              </ToolGroup>
            ))}
          </GraphFooter>
        </GraphColumn>
        <MarkerColumn>
          <Icon name="marker" size={8} />
          <Icon name="compButton" size={8} />
        </MarkerColumn>
      </TimelineBody>
    </TimelinePanel>
  );
}

/* ---------- bottom strip ---------- */

const StatusStrip = styled.footer`
  height: 4px;
  flex: none;
  display: flex;
  gap: 4px;
  padding: 1px 0 0 2px;
  overflow: hidden;
  color: #8a8a8a;
  background: #232323;
  border-top: 1px solid #111;
  line-height: 6px;
  white-space: nowrap;
`;

const StripText = styled.span`
  width: ${props => props.$width}px;
  margin-left: 10px;
`;

const StripScroll = styled.span`
  width: 148px;
  height: 5px;
  border-radius: 3px;
  background: #333;
`;

export default function App() {
  return (
    <Page>
      <GlobalStyle />
      <TopBar />
      <Upper>
        <Project />
        <Composition />
        <EdgePanel />
      </Upper>
      <Timeline />
      <StatusStrip>
        <Cells $blue><Icon name="frameBlend" size={6} /></Cells>
        <Icon name="half" size={6} />
        <Icon name="film" size={6} />
        <Icon name="folder" size={6} />
        <StripText $width={74}>Frame Render Time 2ms</StripText>
        <StripText $width={200}>Toggle Switches / Modes</StripText>
        <StripScroll />
      </StatusStrip>
    </Page>
  );
}
